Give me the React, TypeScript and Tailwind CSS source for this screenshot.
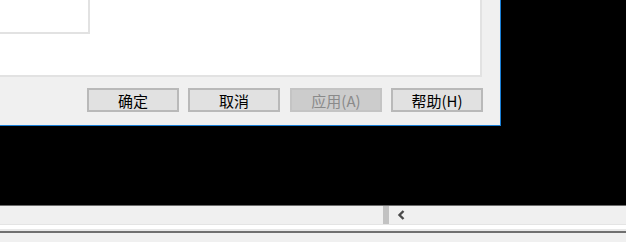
const cjk = { fontFamily: '"Noto Sans CJK SC", "Liberation Sans", sans-serif' };

function DlgButton({ label, disabled, className = '' }: { label: string; disabled?: boolean; className?: string }) {
  return (
    <div
      style={cjk}
      className={
        'w-[92px] h-[24px] flex items-center justify-center text-[15px] leading-none border-2 ' +
        (disabled
          ? 'bg-[#cccccc] border-[#c4c4c4] text-[#8a8a8a] '
          : 'bg-[#e1e1e1] border-[#b9b9b9] text-black ') +
        className
      }
    >
      {label}
    </div>
  );
}

export default function App() {
  return (
    <div className="w-[626px] h-[242px] flex flex-col bg-black overflow-hidden">
      {/* dialog + desktop */}
      <div className="flex h-[205px]">
        <div className="w-[501px] h-[126px] bg-[#f0f0f0] border-r border-b border-[#1a7fd6] flex flex-col">
          <div className="w-[482px] h-[77px] bg-white border-r-2 border-b-2 border-[#e2e2e2]">
            <div className="w-[90px] h-[34px] border-r-2 border-b-2 border-[#e2e2e2]" />
          </div>
          <div className="flex mt-[11px] pl-[87px]">
            <DlgButton label="确定" />
            <DlgButton label="取消" className="ml-[9px]" />
            <DlgButton label="应用(A)" disabled className="ml-[10px]" />
            <DlgButton label="帮助(H)" className="ml-[9px]" />
          </div>
        </div>
        <div className="flex-1" />
      </div>

      {/* horizontal scroll bar */}
      <div className="border-t border-[#6b6b6b] bg-[#f0f0f0] h-[19px] flex items-center">
        <div className="ml-[383px] w-[6px] h-[18px] bg-[#c2c2c2]" />
        <svg className="ml-[8px]" width="9" height="10" viewBox="0 0 9 10">
          <path d="M6.5 1 L2.5 5 L6.5 9" fill="none" stroke="#4a4a4a" strokeWidth="2.4" />
        </svg>
      </div>
      <div className="h-px bg-[#e4e4e4]" />
      <div className="h-[4px] bg-white" />
      <div className="h-[2px] bg-[#e8e8e8]" />
      <div className="h-[2px] bg-[#707070]" />
      <div className="flex-1 bg-[#f0f0f0]" />
    </div>
  );
}
